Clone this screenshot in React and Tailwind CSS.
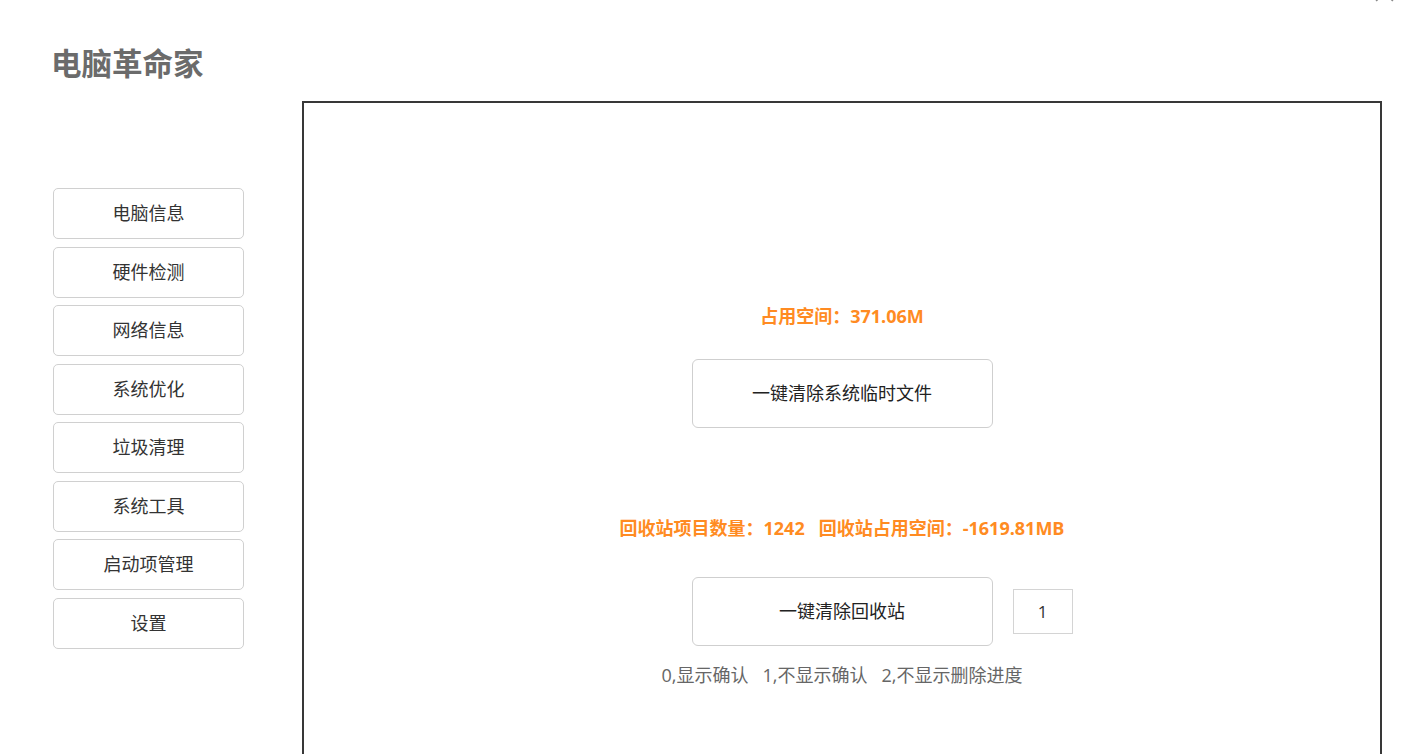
const menu = ['电脑信息', '硬件检测', '网络信息', '系统优化', '垃圾清理', '系统工具', '启动项管理', '设置'];

export default function App() {
  return (
    <div
      className="relative h-[754px] w-[1412px] overflow-hidden bg-white pl-[53px]"
      style={{ fontFamily: '"Open Sans", "Noto Sans CJK SC", sans-serif' }}
    >
      {/* close mark scrolled off the top */}
      <svg className="absolute right-[17px] top-[-18px] h-[21px] w-[21px]" viewBox="0 0 20 20">
        <path d="M2 2 L18 18 M18 2 L2 18" stroke="#888" strokeWidth="1.6" />
      </svg>

      <h1 className="-ml-[2px] mt-[45px] text-[30.5px] font-bold leading-[36px] text-[#6b6b6b]">电脑革命家</h1>

      <div className="mt-[20px] flex">
        <div className="mt-[87px] flex w-[191px] flex-col gap-[7.5px]">
          {menu.map((m) => (
            <button
              key={m}
              className="flex h-[51px] items-center justify-center rounded-[5px] border border-[#d0d0d0] bg-white text-[18px] text-[#333]"
            >
              {m}
            </button>
          ))}
        </div>

        <div className="ml-[58px] flex h-[700px] w-[1080px] flex-col items-center border-2 border-[#383838]">
          <p className="mt-[201px] text-[18px] font-bold leading-[24px] text-[#ff8b22]">占用空间：371.06M</p>
          <button className="mt-[31px] h-[69px] w-[301px] rounded-[6px] border border-[#cfcfcf] bg-white text-[18px] text-[#222]">
            一键清除系统临时文件
          </button>

          <p className="mt-[88px] whitespace-pre text-[18px] font-bold leading-[24px] text-[#ff8b22]">
            回收站项目数量：1242   回收站占用空间：-1619.81MB
          </p>
          <div className="mt-[37px] grid w-full grid-cols-[1fr_auto_1fr] items-center">
            <div />
            <button className="h-[69px] w-[301px] rounded-[6px] border border-[#cfcfcf] bg-white text-[18px] text-[#222]">
              一键清除回收站
            </button>
            <div className="pl-[20px]">
              <div className="flex h-[45px] w-[60px] items-center justify-center border border-[#d4d4d4] text-[17px] text-[#333]">
                1
              </div>
            </div>
          </div>
          <p className="mt-[17px] whitespace-pre text-[18px] leading-[24px] text-[#666]">
            0,显示确认   1,不显示确认   2,不显示删除进度
          </p>
        </div>
      </div>
    </div>
  );
}
